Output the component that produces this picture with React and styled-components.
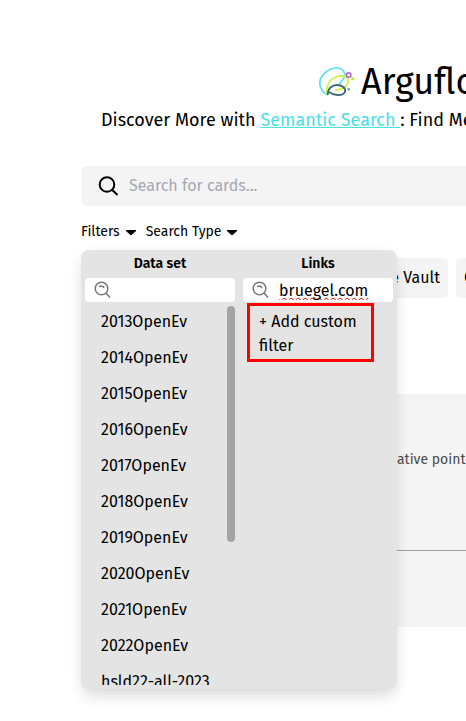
import React from "react";
import styled, { createGlobalStyle } from "styled-components";

const GlobalStyle = createGlobalStyle`
  *, *::before, *::after { box-sizing: border-box; }
  body {
    margin: 0;
    background: #fff;
    color: #000;
    font-family: "Fira Sans", "Noto Sans", sans-serif;
    font-size: 16px;
    line-height: 24px;
    overflow-x: hidden;
  }
  button, input { font: inherit; color: inherit; border: 0; padding: 0; margin: 0; background: none; }
  button { cursor: pointer; }
  input { outline: none; min-width: 0; }
  svg { flex: none; }
`;

const Page = styled.main`
  padding: 60px 0 92px 81px;
  overflow: hidden;
  white-space: nowrap;
`;

const Brand = styled.div`
  display: flex;
  align-items: center;
  gap: 6px;
  height: 44px;
  padding-left: 236px;
`;

const BrandName = styled.h1`
  margin: 0;
  font-size: 36px;
  line-height: 44px;
  font-weight: 400;
`;

const Tagline = styled.p`
  margin: 0 0 32px;
  padding: 2px 0 0 20px;
  font-size: 18px;
  line-height: 28px;
`;

const TagLink = styled.a`
  color: #4be0e6;
  text-decoration: underline;
  white-space: pre;
`;

const SearchBar = styled.label`
  display: flex;
  align-items: center;
  gap: 9px;
  height: 40px;
  padding-left: 16px;
  border-radius: 6px 0 0 6px;
  background: #f4f4f4;
`;

const SearchInput = styled.input`
  flex: 1;
  &::placeholder { color: #a3a8b4; opacity: 1; }
`;

const Toolbar = styled.div`
  position: relative;
  display: flex;
  gap: 8px;
  margin-top: 16px;
  font-size: 14px;
  line-height: 20px;
`;

const MenuButton = styled.button`
  display: flex;
  align-items: center;
  gap: 4px;
`;

const Menu = styled.div`
  position: absolute;
  z-index: 1;
  top: 28px;
  left: 0;
  display: grid;
  grid-template-columns: 150px 150px;
  gap: 8px;
  padding: 4px;
  border-radius: 8px;
  background: #e4e4e4;
  box-shadow: 0 10px 15px -3px rgba(0, 0, 0, 0.1), 0 4px 16px rgba(0, 0, 0, 0.06);
`;

const Column = styled.section`
  display: flex;
  flex-direction: column;
  gap: 4px;
`;

const ColumnTitle = styled.h2`
  margin: 0;
  font-size: 14px;
  line-height: 20px;
  font-weight: 600;
  text-align: center;
`;

const FilterBox = styled.label`
  display: flex;
  align-items: center;
  gap: 9px;
  height: 24px;
  padding: 0 8px;
  border-radius: 4px;
  background: #fff;
  font-size: 16px;
`;

const FilterInput = styled.input`
  flex: 1;
  width: 0;
  height: 24px;
  text-decoration: ${(p) => (p.$misspelt ? "underline wavy #e80000 1px" : "none")};
  text-decoration-skip-ink: none;
`;

const ScrollArea = styled.div`
  display: flex;
  height: 379px;
  overflow: hidden;
`;

const Options = styled.div`
  flex: 1;
  display: flex;
  flex-direction: column;
  gap: 4px;
`;

const Option = styled.button`
  flex: none;
  max-width: 100%;
  padding: 4px 16px;
  font-size: 16px;
  line-height: 24px;
  text-align: left;
  white-space: normal;
`;

const ScrollThumb = styled.div`
  width: 8px;
  height: 236px;
  border-radius: 4px;
  background: #a3a3a3;
`;

const Highlighted = styled.div`
  position: relative;
  display: flex;
  &::after {
    content: "";
    position: absolute;
    inset: -3px 19px 0 4px;
    border: 3px solid #fe0000;
    pointer-events: none;
  }
`;

const Actions = styled.div`
  display: flex;
  gap: 8px;
  margin-top: 16px;
`;

const Chip = styled.button`
  flex: none;
  width: ${(p) => (p.$wide ? "367px" : "120px")};
  height: 40px;
  padding: 0 8px;
  border-radius: 4px;
  background: #f4f4f4;
  text-align: ${(p) => (p.$wide ? "right" : "left")};
`;

const Card = styled.article`
  margin-top: 96px;
  padding: 52px 0 76px;
  background: #f4f4f4;
  color: #4a4a4a;
`;

const CardText = styled.p`
  margin: 0;
  padding: 0 0 76px 316px;
  font-size: 14px;
  line-height: 28px;
`;

const Divider = styled.hr`
  margin: 0;
  border: 0;
  height: 1px;
  background: #a3a3a3;
`;

const Logo = () => (
  <svg width="38" height="36" viewBox="0 0 38 36" fill="none" aria-hidden="true">
    <path d="M11 31C4 28 1 20 4 14C8 6 18 2 24 5C30 8 28 15 22 20" stroke="#66e3ea" strokeWidth="1.8" />
    <path d="M11 31C8 25 11 17 17 14C22 11 30 11 31 16C32 22 25 26 18 26" stroke="#d2f34a" strokeWidth="1.8" />
    <path d="M11 31C10 25 15 21 20 21C25 21 29 24 28 28C25 33 16 31 12 28" stroke="#3f6875" strokeWidth="1.8" />
    <circle cx="31.7" cy="11" r="2.3" stroke="#b85fcf" strokeWidth="1.5" />
    <circle cx="35.7" cy="14.800" r="1.800" fill="#c8ec48" />
    <circle cx="31.7" cy="25.300" r="1.200" fill="#4aa0a8" />
  </svg>
);

const SearchIcon = () => (
  <svg width="23" height="24" viewBox="0 0 23 24" fill="none" stroke="#000" strokeWidth="2" aria-hidden="true">
    <circle cx="10" cy="10.500" r="7.300" />
    <path d="M15.300 16L20.500 21" />
  </svg>
);

const FilterIcon = () => (
  <svg width="19" height="20" viewBox="0 0 19 20" fill="none" stroke="#777" strokeWidth="1.500" aria-hidden="true">
    <circle cx="8.500" cy="8.500" r="6.300" />
    <path d="M13 13L17 17.500M6 6.800C7.500 5.500 10 5.800 11 7.800" />
  </svg>
);

const Caret = () => (
  <svg width="14" height="8" viewBox="0 0 14 8" aria-hidden="true">
    <path d="M2 2.500H12L7 7Z" fill="#000" stroke="#000" strokeLinejoin="round" />
  </svg>
);

const dataSets = [
  "2013OpenEv", "2014OpenEv", "2015OpenEv", "2016OpenEv", "2017OpenEv", "2018OpenEv",
  "2019OpenEv", "2020OpenEv", "2021OpenEv", "2022OpenEv", "hsld22-all-2023",
];

export default function App() {
  return (
    <>
      <GlobalStyle />
      <Page>
        <Brand>
          <Logo />
          <BrandName>Arguflow</BrandName>
        </Brand>
        <Tagline>
          Discover More with <TagLink href="#search">{"Semantic Search "}</TagLink>: Find Me
        </Tagline>
        <SearchBar>
          <SearchIcon />
          <SearchInput type="text" aria-label="Search for cards" placeholder="Search for cards..." />
        </SearchBar>
        <Toolbar>
          <MenuButton type="button" aria-expanded="true">Filters <Caret /></MenuButton>
          <MenuButton type="button">Search Type <Caret /></MenuButton>
          <Menu>
            <Column>
              <ColumnTitle>Data set</ColumnTitle>
              <FilterBox>
                <FilterIcon />
                <FilterInput type="text" aria-label="Filter data sets" />
              </FilterBox>
              <ScrollArea>
                <Options>
                  {dataSets.map((name) => (
                    <Option type="button" key={name}>{name}</Option>
                  ))}
                </Options>
                <ScrollThumb />
              </ScrollArea>
            </Column>
            <Column>
              <ColumnTitle>Links</ColumnTitle>
              <FilterBox>
                <FilterIcon />
                <FilterInput $misspelt type="text" spellCheck={false} aria-label="Filter links" defaultValue="bruegel.com" />
              </FilterBox>
              <Highlighted>
                <Option type="button">+ Add custom filter</Option>
              </Highlighted>
            </Column>
          </Menu>
        </Toolbar>
        <Actions>
          <Chip type="button" $wide>Create Vault</Chip>
          <Chip type="button">C</Chip>
        </Actions>
        <Card>
          <CardText>ative point</CardText>
          <Divider />
        </Card>
      </Page>
    </>
  );
}
